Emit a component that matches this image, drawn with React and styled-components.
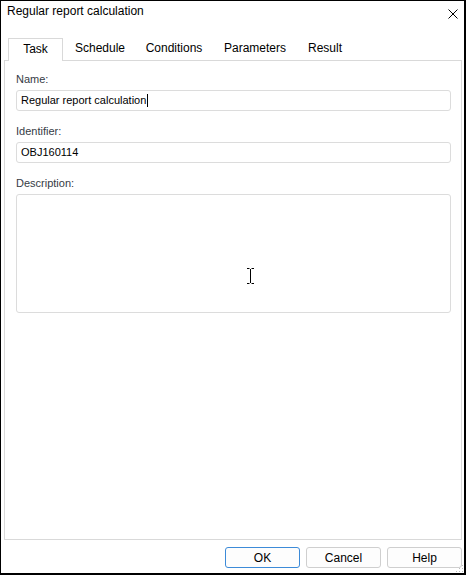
import React from 'react'
import styled, { createGlobalStyle } from 'styled-components'

const GlobalStyle = createGlobalStyle`
    body {
        margin: 0;
        background: #fff;
    }
    * {
        box-sizing: border-box;
    }
`

const Window = styled.div`
    position: relative;
    width: 466px;
    height: 575px;
    display: flex;
    flex-direction: column;
    background: #fff;
    border-top: 1px solid #000;
    border-left: 1px solid #000;
    border-right: 2px solid #000;
    border-bottom: 2px solid #000;
    font-family: "Liberation Sans", Arial, sans-serif;
`
const TitleBar = styled.div`
    height: 29px;
    display: flex;
    justify-content: space-between;
    align-items: flex-start;
    padding: 2px 0 0 6px;
    font-size: 12px;
    line-height: 16px;
    color: #000;
`
const CloseButton = styled.div`
    width: 10px;
    height: 10px;
    margin: 6px 6px 0 0;
    display: flex;
`
const TabsRow = styled.div`
    display: flex;
    margin: 8px 0 0 7px;
    height: 22px;
    position: relative;
    z-index: 1;
`
const Tab = styled.div`
    width: ${p => p.w}px;
    height: ${p => (p.active ? 23 : 22)}px;
    display: flex;
    align-items: center;
    justify-content: center;
    font-size: 12px;
    color: #000;
    background: #fff;
    border: ${p => (p.active ? '1px solid #d9d9d9' : 'none')};
    border-bottom: none;
    padding-bottom: 2px;
`
const Panel = styled.div`
    flex: 1;
    margin: 0 2px 0 3px;
    border: 1px solid #d9d9d9;
    padding: 12px 10px 0 11px;
    display: flex;
    flex-direction: column;
`
const Field = styled.div`
    display: flex;
    flex-direction: column;
    margin-bottom: 14px;
`
const Label = styled.div`
    font-size: 11px;
    line-height: 13px;
    height: 13px;
    color: #353b45;
    margin-bottom: 4px;
`
const Input = styled.div`
    height: ${p => p.h || 21}px;
    border: 1px solid #dcdcdc;
    border-radius: 3px;
    background: #fff;
    font-size: 11px;
    line-height: 13px;
    padding: 3px 0 0 4px;
    color: #000;
    display: flex;
    align-items: flex-start;
`
const Caret = styled.span`
    display: inline-block;
    width: 1px;
    height: 13px;
    background: #000;
    margin-left: 1px;
`
const Footer = styled.div`
    display: flex;
    justify-content: flex-end;
    gap: 6px;
    padding: 7px 2px 5px 0;
`
const Button = styled.div`
    width: 75px;
    height: 21px;
    display: flex;
    align-items: center;
    justify-content: center;
    font-size: 12px;
    color: #000;
    background: #fdfdfd;
    border: 1px solid ${p => (p.primary ? '#3d8bd8' : '#cfcfcf')};
    border-radius: 3px;
`
const Pointer = styled.svg`
    position: absolute;
    left: 245px;
    top: 266px;
`
const Grip = styled.svg`
    position: absolute;
    right: 0;
    bottom: 0;
`

const tabs = [
    { name: 'Task', w: 55 },
    { name: 'Schedule', w: 74 },
    { name: 'Conditions', w: 74 },
    { name: 'Parameters', w: 88 },
    { name: 'Result', w: 52 },
]

const App = () => {
    return (
        <>
            <GlobalStyle />
            <Window>
                <TitleBar>
                    <span>Regular report calculation</span>
                    <CloseButton>
                        <svg width="10" height="10" viewBox="0 0 10 10">
                            <path d="M0.5 0.5 L9.5 9.5 M9.5 0.5 L0.5 9.5" stroke="#000" strokeWidth="1" />
                        </svg>
                    </CloseButton>
                </TitleBar>
                <TabsRow>
                    {tabs.map((t, i) => (
                        <Tab key={t.name} w={t.w} active={i === 0}>{t.name}</Tab>
                    ))}
                </TabsRow>
                <Panel>
                    <Field>
                        <Label>Name:</Label>
                        <Input>Regular report calculation<Caret /></Input>
                    </Field>
                    <Field>
                        <Label>Identifier:</Label>
                        <Input>OBJ160114</Input>
                    </Field>
                    <Field>
                        <Label>Description:</Label>
                        <Input h={119} />
                    </Field>
                </Panel>
                <Footer>
                    <Button primary>OK</Button>
                    <Button>Cancel</Button>
                    <Button>Help</Button>
                </Footer>
                {/* mouse cursor over the description box */}
                <Pointer width="9" height="18" viewBox="0 0 9 18">
                    <path d="M1 1.5 H3.5 M5.5 1.5 H8 M4.5 2 V16 M1 16.5 H3.5 M5.5 16.5 H8" stroke="#000" strokeWidth="1" fill="none" />
                </Pointer>
                <Grip width="8" height="8" viewBox="0 0 8 8">
                    <rect x="6" y="0" width="1" height="1" fill="#bbb" />
                    <rect x="3" y="3" width="1" height="1" fill="#bbb" />
                    <rect x="6" y="3" width="1" height="1" fill="#bbb" />
                    <rect x="0" y="6" width="1" height="1" fill="#bbb" />
                    <rect x="3" y="6" width="1" height="1" fill="#bbb" />
                    <rect x="6" y="6" width="1" height="1" fill="#bbb" />
                </Grip>
            </Window>
        </>
    )
}

export default App
